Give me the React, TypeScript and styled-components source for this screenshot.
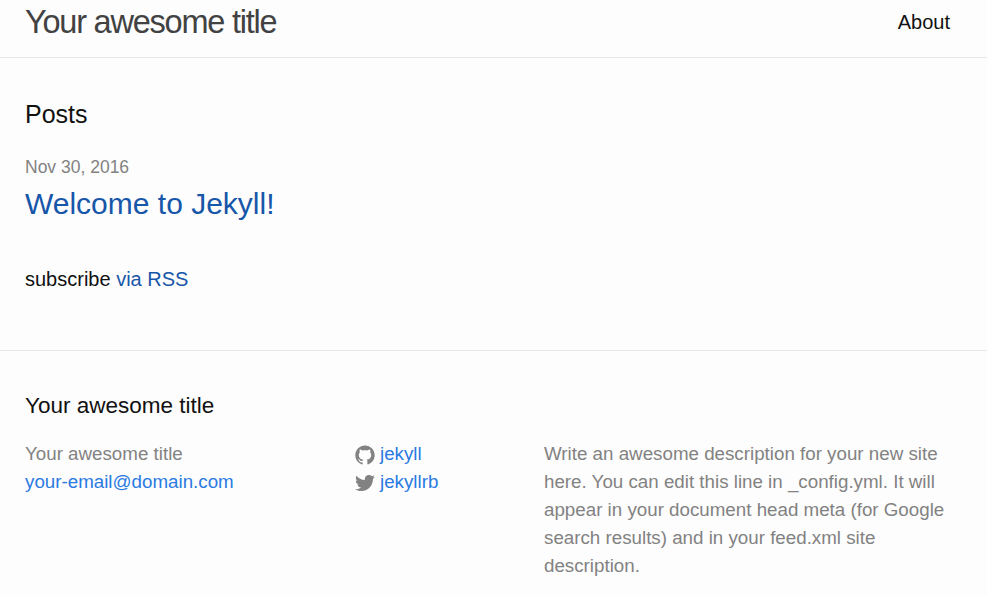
import React from "react";
import styled, { createGlobalStyle } from "styled-components";

const GlobalStyle = createGlobalStyle`
  * { box-sizing: border-box; margin: 0; padding: 0; }
  body { background: #fdfdfd; color: #111; font: 400 20px/30px "Liberation Sans", Arial, sans-serif; overflow: hidden; }
`;
const Header = styled.header`
  display: flex; justify-content: space-between; height: 58px;
  padding: 0 37px 0 25px; border-bottom: 1px solid #e8e8e8;
`;
const SiteTitle = styled.a`
  font-size: 32.5px; line-height: 44px; letter-spacing: -1.22px; color: #424242; white-space: nowrap;
`;
const NavLink = styled.a`line-height: 44px; color: #111;`;
const Main = styled.main`height: 292px; padding: 38px 25px 0;`;
const Heading = styled.h1`font-size: 25px; font-weight: 400; line-height: 36px;`;
const Posts = styled.ul`list-style: none; padding-top: 21px;`;
const PostDate = styled.span`display: block; font-size: 17.5px; line-height: 28px; color: #828282;`;
const PostLink = styled.a`display: block; font-size: 30px; line-height: 45px; color: #1756a9;`;
const Subscribe = styled.p`margin-top: 38px;`;
const Accent = styled.a`color: #1756a9;`;
const Footer = styled.footer`border-top: 1px solid #e8e8e8; padding: 37px 25px 0;`;
const FooterTitle = styled.h2`font-size: 22.5px; font-weight: 400; line-height: 36px;`;
const Columns = styled.div`
  display: grid; grid-template-columns: 330px 189px 410px; padding-top: 16px;
  font-size: 18.75px; line-height: 28px; color: #828282;
`;
const Column = styled.div`white-space: nowrap;`;
const FooterLink = styled.a`display: block; color: #2a7ae2;`;
const SocialLink = styled.a`display: flex; align-items: center; gap: 5px; color: #2a7ae2;`;
const Icon = styled.svg`width: 20px; height: 20px; fill: #828282; margin-top: 1px;`;

export default function App() {
  return (
    <>
      <GlobalStyle />
      <Header>
        <SiteTitle>Your awesome title</SiteTitle>
        <NavLink>About</NavLink>
      </Header>
      <Main>
        <Heading>Posts</Heading>
        <Posts>
          <li>
            <PostDate>Nov 30, 2016</PostDate>
            <PostLink>Welcome to Jekyll!</PostLink>
          </li>
        </Posts>
        <Subscribe>subscribe <Accent>via RSS</Accent></Subscribe>
      </Main>
      <Footer>
        <FooterTitle>Your awesome title</FooterTitle>
        <Columns>
          <Column>
            <div>Your awesome title</div>
            <FooterLink>your-email@domain.com</FooterLink>
          </Column>
          <Column>
            <SocialLink>
              <Icon viewBox="0 0 16 16"><path d="M7.999,0.431c-4.285,0-7.76,3.474-7.76,7.761 c0,3.428,2.223,6.337,5.307,7.363c0.388,0.071,0.53-0.168,0.53-0.374c0-0.184-0.007-0.672-0.01-1.32 c-2.159,0.469-2.614-1.04-2.614-1.04c-0.353-0.896-0.862-1.135-0.862-1.135c-0.705-0.481,0.053-0.472,0.053-0.472 c0.779,0.055,1.189,0.8,1.189,0.8c0.692,1.186,1.816,0.843,2.258,0.645c0.071-0.502,0.271-0.843,0.493-1.037 C4.86,11.425,3.049,10.76,3.049,7.786c0-0.847,0.302-1.54,0.799-2.082C3.768,5.507,3.501,4.718,3.924,3.65 c0,0,0.652-0.209,2.134,0.796C6.677,4.273,7.34,4.187,8,4.184c0.659,0.003,1.323,0.089,1.943,0.261 c1.482-1.004,2.132-0.796,2.132-0.796c0.423,1.068,0.157,1.857,0.077,2.054c0.497,0.542,0.798,1.235,0.798,2.082 c0,2.981-1.814,3.637-3.543,3.829c0.279,0.24,0.527,0.713,0.527,1.437c0,1.037-0.01,1.874-0.01,2.129 c0,0.208,0.14,0.449,0.534,0.373c3.081-1.028,5.302-3.935,5.302-7.362C15.76,3.906,12.285,0.431,7.999,0.431z" /></Icon>
              <span>jekyll</span>
            </SocialLink>
            <SocialLink>
              <Icon viewBox="0 0 16 16"><path d="M15.969,3.058c-0.586,0.26-1.217,0.436-1.878,0.515c0.675-0.405,1.194-1.045,1.438-1.809c-0.632,0.375-1.332,0.647-2.076,0.793c-0.596-0.636-1.446-1.033-2.387-1.033c-1.806,0-3.27,1.464-3.27,3.27c0,0.256,0.029,0.506,0.085,0.745C5.163,5.404,2.753,4.102,1.14,2.124C0.859,2.607,0.698,3.168,0.698,3.767c0,1.134,0.577,2.135,1.455,2.722C1.616,6.472,1.112,6.325,0.671,6.08c0,0.014,0,0.027,0,0.041c0,1.584,1.127,2.906,2.623,3.206C3.02,9.402,2.731,9.442,2.433,9.442c-0.211,0-0.416-0.021-0.615-0.059c0.416,1.299,1.624,2.245,3.055,2.271c-1.119,0.877-2.529,1.4-4.061,1.4c-0.264,0-0.524-0.015-0.78-0.046c1.447,0.928,3.166,1.469,5.013,1.469c6.015,0,9.304-4.983,9.304-9.304c0-0.142-0.003-0.283-0.009-0.423C14.976,4.29,15.531,3.714,15.969,3.058z" /></Icon>
              <span>jekyllrb</span>
            </SocialLink>
          </Column>
          <Column>
            Write an awesome description for your new site<br />
            here. You can edit this line in _config.yml. It will<br />
            appear in your document head meta (for Google<br />
            search results) and in your feed.xml site<br />
            description.
          </Column>
        </Columns>
      </Footer>
    </>
  );
}
